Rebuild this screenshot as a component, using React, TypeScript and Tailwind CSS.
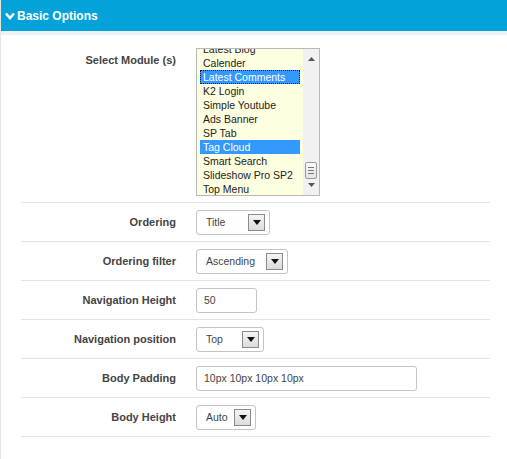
import React from "react";

const font = { fontFamily: '"Liberation Sans", Arial, sans-serif' };

function Arrow() {
  return (
    <span className="flex h-[17px] w-[17px] items-center justify-center border border-[#8a8a8a] bg-gradient-to-b from-[#f4f4f4] to-[#dcdcdc]">
      <svg width="8" height="5" viewBox="0 0 8 5">
        <polygon points="0,0 8,0 4,5" fill="#111" />
      </svg>
    </span>
  );
}

function Select({ value, width }: { value: string; width: string }) {
  return (
    <div
      className={`flex h-[25px] ${width} items-center justify-between rounded-[3px] border border-[#c4c4c4] bg-white pl-[9px] pr-[4px] text-[10.5px] text-[#444]`}
    >
      <span>{value}</span>
      <Arrow />
    </div>
  );
}

function Input({ value, width }: { value: string; width: string }) {
  return (
    <div
      className={`flex h-[25px] ${width} items-center rounded-[3px] border border-[#c4c4c4] bg-white pl-[7px] text-[10.5px] text-[#444]`}
    >
      {value}
    </div>
  );
}

function Row({ label, children }: { label: string; children: React.ReactNode }) {
  return (
    <div className="flex items-center gap-[20px] border-b border-[#e3e3e3] pt-[7px] pb-[6px]">
      <div className="w-[155px] text-right text-[11px] font-bold text-[#444]">{label}</div>
      {children}
    </div>
  );
}

const items = [
  "Latest Blog",
  "Calender",
  "Latest Comments",
  "K2 Login",
  "Simple Youtube",
  "Ads Banner",
  "SP Tab",
  "Tag Cloud",
  "Smart Search",
  "Slideshow Pro SP2",
  "Top Menu",
];

function ListBox() {
  return (
    <div className="flex h-[148px] w-[124px] border border-[#b8b8b8] bg-[#fefee0]">
      <div className="relative flex-1 overflow-hidden">
        <div className="-mt-[7px] flex flex-col">
          {items.map((it) => {
            const sel = it === "Latest Comments" || it === "Tag Cloud";
            const focus = it === "Latest Comments";
            return (
              <div
                key={it}
                className={`mx-[3px] h-[14px] pl-[3px] text-[10.5px] leading-[14px] whitespace-nowrap ${
                  sel ? "bg-[#3399ff] text-white" : "text-[#222]"
                } ${focus ? "outline-1 outline-dotted outline-[#1a1a1a] -outline-offset-1" : ""}`}
              >
                {it}
              </div>
            );
          })}
        </div>
      </div>
      <div className="flex w-[16px] flex-col items-center justify-between bg-[#f1f1f1] py-[8px]">
        <svg width="7" height="4" viewBox="0 0 7 4">
          <polygon points="0,4 7,4 3.5,0" fill="#555" />
        </svg>
        <div className="flex flex-1 flex-col justify-end pb-[4px]">
          <div className="flex h-[17px] w-[12px] flex-col items-center justify-center gap-[2px] rounded-[2px] border border-[#9a9a9a] bg-gradient-to-b from-[#fafafa] to-[#e4e4e4]">
            <div className="h-px w-[6px] bg-[#777]" />
            <div className="h-px w-[6px] bg-[#777]" />
            <div className="h-px w-[6px] bg-[#777]" />
          </div>
        </div>
        <svg width="7" height="4" viewBox="0 0 7 4">
          <polygon points="0,0 7,0 3.5,4" fill="#555" />
        </svg>
      </div>
    </div>
  );
}

export default function App() {
  return (
    <div className="min-h-screen w-[507px] border-l border-[#e6e6e6] bg-white" style={font}>
      <div className="flex h-[31px] items-center gap-[2px] bg-[#03a3da] pl-[4px]">
        <svg width="10" height="8" viewBox="0 0 10 8">
          <polyline points="1,1.5 5,6 9,1.5" fill="none" stroke="#fff" strokeWidth="2.6" />
        </svg>
        <span className="text-[12px] font-bold text-white">Basic Options</span>
      </div>
      <div className="h-[4px] bg-[#eef2f5]" />
      <div className="pl-[20px] pr-[17px]">
        <div className="flex items-start gap-[20px] border-b border-[#e3e3e3] pt-[13px] pb-[6px]">
          <div className="w-[155px] pt-[4px] text-right text-[11px] font-bold text-[#444]">
            Select Module (s)
          </div>
          <ListBox />
        </div>
        <Row label="Ordering">
          <Select value="Title" width="w-[74px]" />
        </Row>
        <Row label="Ordering filter">
          <Select value="Ascending" width="w-[92px]" />
        </Row>
        <Row label="Navigation Height">
          <Input value="50" width="w-[61px]" />
        </Row>
        <Row label="Navigation position">
          <Select value="Top" width="w-[68px]" />
        </Row>
        <Row label="Body Padding">
          <Input value="10px 10px 10px 10px" width="w-[221px]" />
        </Row>
        <Row label="Body Height">
          <Select value="Auto" width="w-[60px]" />
        </Row>
      </div>
    </div>
  );
}
